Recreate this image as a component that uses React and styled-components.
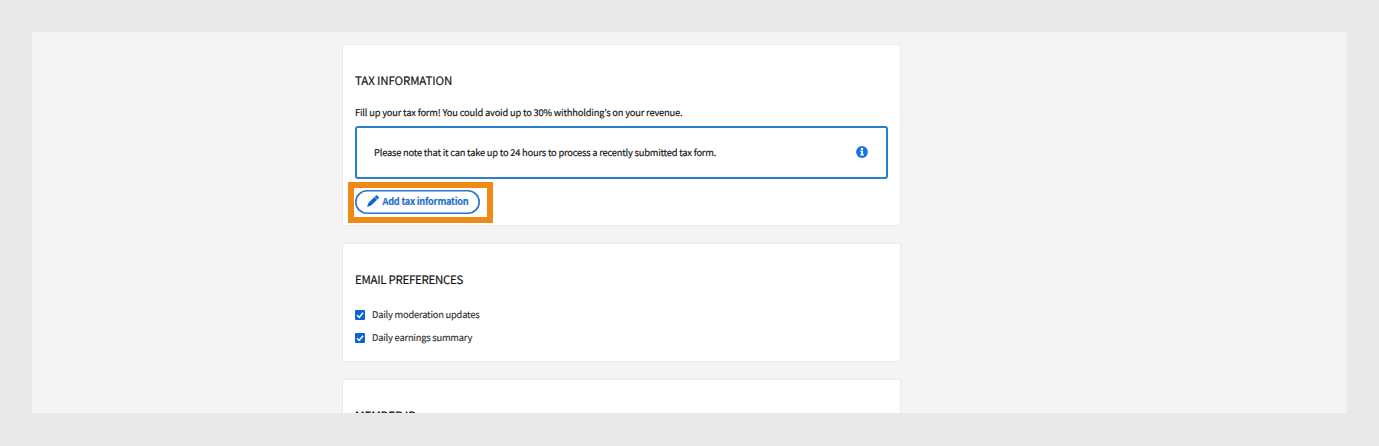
import React from "react";
import styled, { createGlobalStyle } from "styled-components";

export default function App() {
  return (
    <>
      <GlobalStyle />
      <Page>
        <Panel>
          <Column>
            <Card $height={182}>
              <Title>TAX INFORMATION</Title>
              <Intro>
                Fill up your tax form! You could avoid up to 30% withholding’s
                on your revenue.
              </Intro>
              <Notice>
                <NoticeText>
                  Please note that it can take up to 24 hours to process a
                  recently submitted tax form.
                </NoticeText>
                <InfoIcon />
              </Notice>
              <ButtonArea>
                <OutlineButton>
                  <PencilIcon />
                  <span>Add tax information</span>
                </OutlineButton>
                <Highlight />
              </ButtonArea>
            </Card>
            <Card $height={119}>
              <Title $spacing='-0.3px'>EMAIL PREFERENCES</Title>
              <Options>
                <Option label='Daily moderation updates' />
                <Option label='Daily earnings summary' />
              </Options>
            </Card>
            <Card $height={119}>
              <Title $bold>MEMBER ID</Title>
            </Card>
          </Column>
        </Panel>
      </Page>
    </>
  );
}

function Option({ label }) {
  return (
    <OptionRow>
      <Box>
        <svg width='10' height='10' viewBox='0 0 10 10' fill='none'>
          <path d='M2.1 5.2 4.2 7.4 8 2.7' stroke='#fff' strokeWidth='1.5' />
        </svg>
      </Box>
      <OptionLabel>{label}</OptionLabel>
    </OptionRow>
  );
}

function InfoIcon() {
  return (
    <svg width='12' height='12' viewBox='0 0 12 12'>
      <circle cx='6' cy='6' r='5.9' fill='#1473e6' />
      <circle cx='6' cy='3' r='1.2' fill='#fff' />
      <path d='M4.3 4.8h2.8v3.4h.8v1.2H4.3V8.2h.8V6h-.8z' fill='#fff' />
    </svg>
  );
}

function PencilIcon() {
  return (
    <svg width='12' height='12' viewBox='0 0 12 12' fill='#0d66d0'>
      <path d='M8.9.6a.9.9 0 0 1 1.2 0l1.5 1.4a.9.9 0 0 1 0 1.2L10.5 4.4 7.7 1.7z' />
      <path d='M7.3 2.1 10.1 4.8 4.1 10.5.6 11.7a.3.3 0 0 1-.4-.4L1.4 7.9z' />
    </svg>
  );
}

const GlobalStyle = createGlobalStyle`
  * {
    box-sizing: border-box;
  }
  body {
    margin: 0;
    background: #e9e9e9;
    font-family: "Noto Sans CJK KR", "Noto Sans", sans-serif;
    text-rendering: geometricPrecision;
    -webkit-text-stroke: 0.15px;
    color: #111;
  }
`;
const Page = styled.main`
  height: 446px;
  padding: 32px 32px 33px;
  overflow: hidden;
`;
const Panel = styled.div`
  height: 381px;
  padding: 12px 0 0 310px;
  overflow: hidden;
  background: #f4f4f4;
`;
const Column = styled.div`
  display: flex;
  flex-direction: column;
  gap: 17px;
  width: 559px;
`;
const Card = styled.section`
  flex: none;
  height: ${(p) => p.$height}px;
  padding: 26px 12px 0;
  border: 1px solid #ececec;
  border-radius: 2px;
  background: #fff;
`;
const Title = styled.h2`
  margin: 0;
  font-size: 11.5px;
  font-weight: ${(p) => (p.$bold ? 500 : 400)};
  line-height: 20px;
  letter-spacing: ${(p) => p.$spacing || "-0.13px"};
  white-space: nowrap;
`;
const Intro = styled.p`
  margin: 13px 0 5px;
  font-size: 9.3px;
  line-height: 17px;
  letter-spacing: -0.17px;
  white-space: nowrap;
`;
const Notice = styled.div`
  display: flex;
  align-items: center;
  justify-content: space-between;
  height: 53px;
  padding: 0 18px 2px 17px;
  border: 2px solid #2680cf;
  border-radius: 3px;
`;
const NoticeText = styled.p`
  margin: 0;
  font-size: 9.3px;
  line-height: 16px;
  letter-spacing: -0.19px;
  white-space: nowrap;
`;
const ButtonArea = styled.div`
  position: relative;
  width: 125px;
  margin-top: 11px;
`;
const OutlineButton = styled.button`
  display: flex;
  align-items: center;
  gap: 3.5px;
  width: 125px;
  height: 24px;
  padding: 0 0 2px 12px;
  border: 0;
  border-radius: 12px;
  box-shadow: inset 0 0 0 1.6px #2a74cc;
  background: #fff;
  font-family: inherit;
  font-size: 9.2px;
  font-weight: 700;
  letter-spacing: -0.23px;
  color: #1f6fc9;
  white-space: nowrap;
  svg {
    flex: none;
  }
`;
/* orange frame drawn over the card, around the button */
const Highlight = styled.div`
  position: absolute;
  top: -8px;
  left: -7px;
  width: 145px;
  height: 41px;
  border: 6px solid #f08a17;
  pointer-events: none;
`;
const Options = styled.div`
  display: flex;
  flex-direction: column;
  gap: 7px;
  margin-top: 17px;
`;
const OptionRow = styled.label`
  display: flex;
  align-items: center;
  gap: 7px;
  height: 16px;
`;
const Box = styled.span`
  display: flex;
  width: 10px;
  height: 10px;
  border-radius: 1px;
  background: #0d66d0;
`;
const OptionLabel = styled.span`
  padding-bottom: 2px;
  font-size: 9.3px;
  line-height: 16px;
  letter-spacing: -0.19px;
  color: #333;
  white-space: nowrap;
`;
